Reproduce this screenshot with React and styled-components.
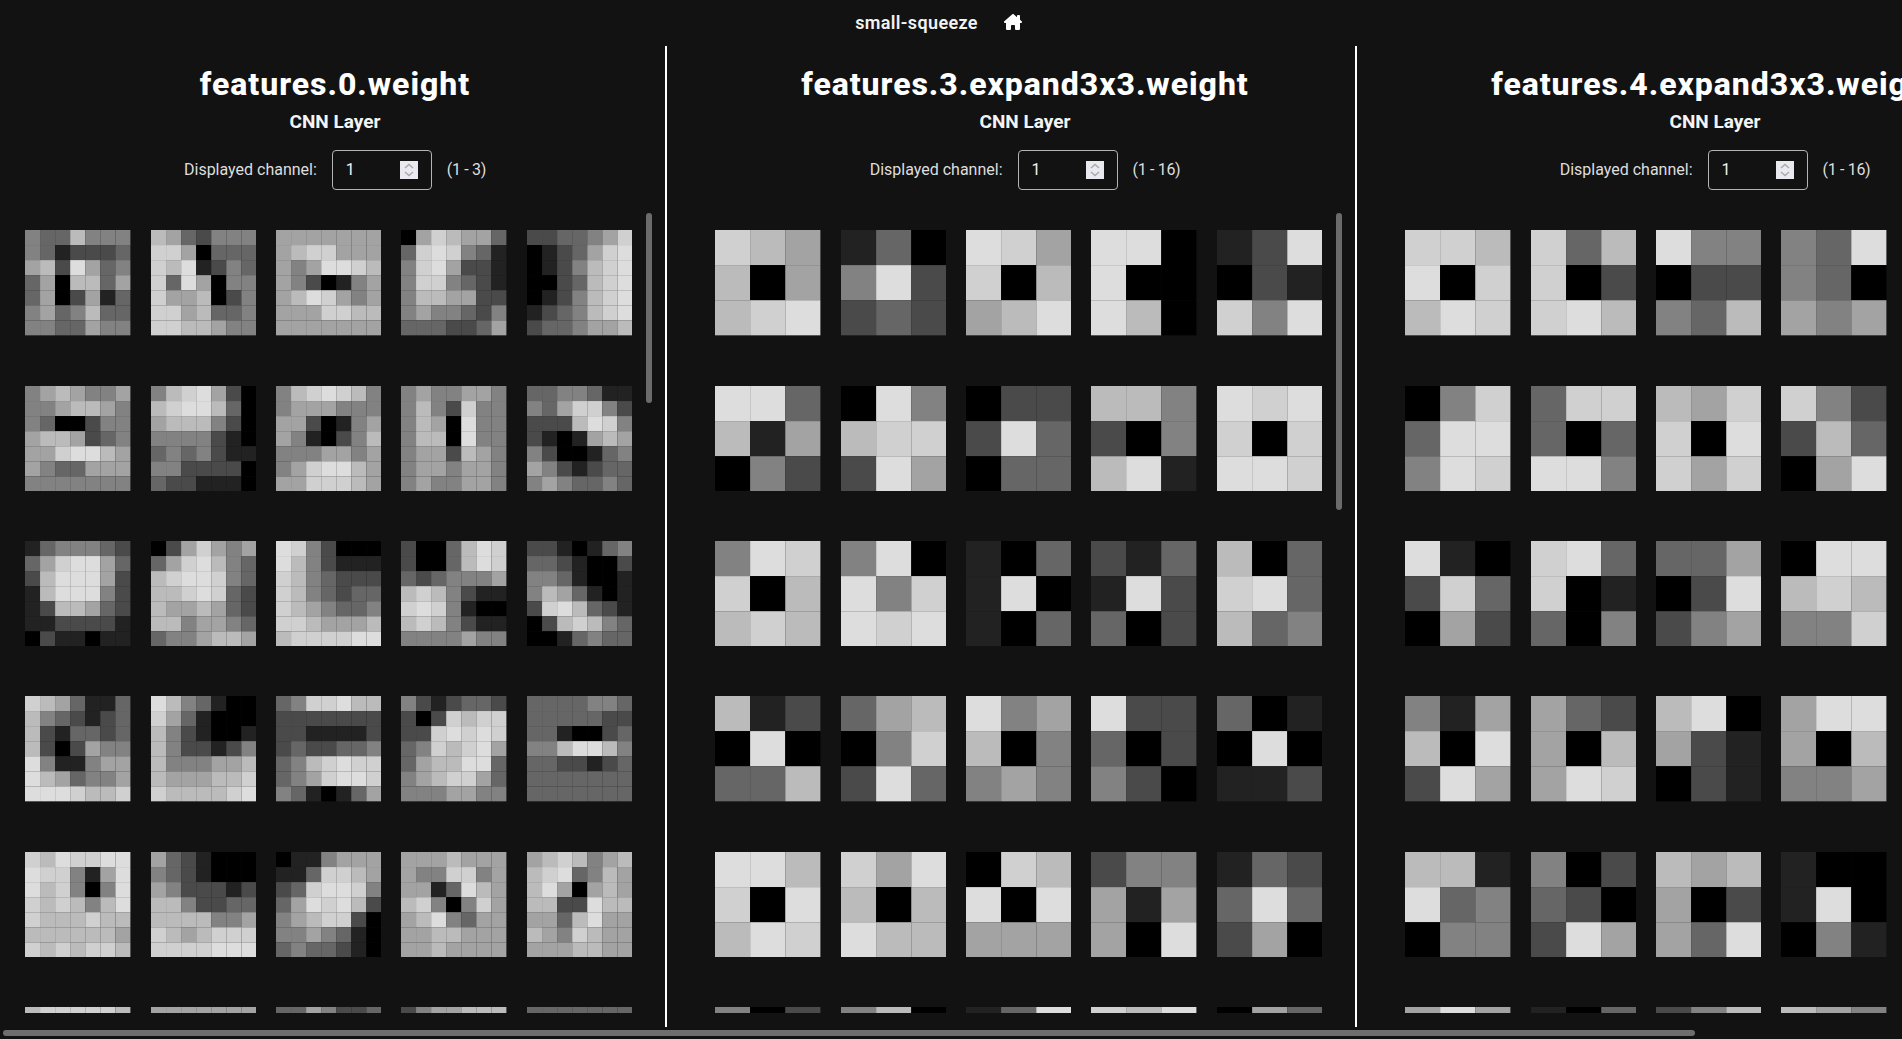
import React from 'react';
import styled, { createGlobalStyle } from 'styled-components';
import { FaHouseChimney } from 'react-icons/fa6';

const GlobalStyle = createGlobalStyle`
    html, body {
        margin: 0;
        background: #121212;
        overflow: hidden;
    }
`;

const SHADES = ['#000000', '#222222', '#4a4a4a', '#666666', '#828282', '#a3a3a3', '#bbbbbb', '#d0d0d0', '#dddddd'];

const SPIN_ICON = `url("data:image/svg+xml,%3Csvg xmlns='http://www.w3.org/2000/svg' width='18' height='18' fill='none' stroke='%23a8a8b0' stroke-width='1.4'%3E%3Cpath d='M5 7l4-3.5L13 7M5 11l4 3.5 4-3.5'/%3E%3C/svg%3E")`;

// each tile is a string of shade indexes, row after row
const LAYERS = [
    {
        name: 'features.0.weight',
        range: '(1 - 3)',
        size: 7,
        columns: 5,
        thumb: 190,
        tiles: [
            '4336444 4312223 5628534 3506635 3502513 4534633 4433544',
            '6532444 7750333 7681243 7385044 7556024 7756334 7766544',
            '5555555 5677555 5458876 5420145 5687545 5557766 5555555',
            '0576553 3787431 4785221 4774321 4665522 4544324 3332235',
            '2233457 0123578 0124678 0023678 0124678 1234678 2334556',
            '4565445 4456654 4300244 5665234 5578865 5433555 4444444',
            '4678520 6788630 5666420 4444210 3434211 4422220 3221110',
            '4678764 4555444 5520145 5410246 4445545 4578865 5577765',
            '4544554 4642744 4650844 4660844 4552654 4554554 4544554',
            '3344311 4357742 2226874 2101565 4200134 5421233 4543343',
            '1344432 3578853 2688852 1688842 1266532 1122221 0211011',
            '0257545 3578643 6788743 6678732 6556532 6645543 3445665',
            '8742000 8642111 7643222 7643233 7654334 7765556 6777788',
            '2003687 2003687 3234445 6764211 7874100 6764211 4444544',
            '2210134 3321002 4431001 4653101 2786321 0267643 0013433',
            '7653113 6432123 6213323 6202544 8411455 8653445 8887667',
            '8643100 7531000 6421001 6422124 6444556 6555667 7666678',
            '3477866 2222222 2211112 2322334 3467877 3457887 4310135',
            '4212332 2027677 2278787 3476785 3566883 4567753 4445544',
            '3333443 3333322 3310023 4468864 3322123 3333333 3333333',
            '7687788 8774158 8674048 7676468 7666766 6666665 7676776',
            '5321000 4321000 5422212 6642233 6666445 7656777 7777888',
            '0114555 1137765 2378874 3587862 4567720 4454310 3433210',
            '5556555 5447745 5513865 6740475 5684355 5566555 5565555',
            '5676456 6783465 6850565 6622866 5536855 6547655 5556655',
            '6777776', '5555555', '3354223', '2455666', '3333333',
        ],
    },
    {
        name: 'features.3.expand3x3.weight',
        range: '(1 - 16)',
        size: 3,
        columns: 5,
        thumb: 297,
        tiles: [
            '765 605 678', '130 482 232', '875 706 568', '880 800 860', '128 021 748',
            '883 615 042', '084 677 285', '022 283 033', '664 204 681', '878 707 887',
            '487 706 676', '480 847 878', '103 180 103', '213 182 302', '603 783 634',
            '612 080 336', '356 047 283', '845 604 454', '822 302 420', '301 080 112',
            '886 708 687', '758 606 866', '076 808 555', '244 515 508', '132 383 250',
            '402', '460', '138', '768', '053',
        ],
    },
    {
        name: 'features.4.expand3x3.weight',
        range: '(1 - 16)',
        size: 3,
        columns: 4,
        thumb: 297,
        tiles: [
            '776 807 687', '736 702 786', '844 022 436', '438 430 545',
            '047 388 487', '377 303 884', '657 708 757', '742 263 058',
            '810 273 052', '783 701 304', '335 028 245', '088 676 447',
            '415 608 285', '532 506 587', '680 521 021', '588 506 445',
            '661 834 044', '402 320 285', '656 502 538', '100 180 041',
            '585', '103', '246', '654',
        ],
    },
];

const Page = styled.div`
    position: relative;
    width: 1902px;
    height: 1039px;
    overflow: hidden;
    background: #121212;
    color: #ffffff;
    font-family: Roboto, "Open Sans", sans-serif;
`;

const TopBar = styled.header`
    height: 46px;
    padding: 0 25px 2px 0;
    box-sizing: border-box;
    display: flex;
    align-items: center;
    justify-content: center;
    gap: 26px;
`;

const AppName = styled.span`
    font-size: 18px;
    font-weight: 600;
    letter-spacing: 0.02em;
    color: #f2f2f2;
`;

const HomeLink = styled.a`
    display: flex;
    color: #ffffff;
`;

const Layers = styled.div`
    display: flex;
    height: 981px;
`;

const Panel = styled.section`
    flex: 0 0 667px;
    box-sizing: border-box;
    height: 981px;
    border-right: 2px solid #ffffff;
    display: flex;
    flex-direction: column;

    & + & {
        margin-left: 23px;
    }
`;

const PanelHead = styled.div`
    height: 164px;
    padding-left: 5px;
    display: flex;
    flex-direction: column;
    align-items: center;
    flex-shrink: 0;
    white-space: nowrap;
`;

const Title = styled.h1`
    margin: 18px 0 0;
    font-size: 32px;
    line-height: 40px;
    font-weight: 800;
    letter-spacing: 0.03em;
`;

const Subtitle = styled.h2`
    margin: 6px 0 0;
    font-size: 19px;
    line-height: 24px;
    font-weight: 700;
    color: #f4f4f4;
`;

const ChannelRow = styled.div`
    margin-top: 16px;
    display: flex;
    align-items: center;
    gap: 15px;
    font-size: 16px;
    color: #dedede;
`;

const ChannelLabel = styled.span`
    padding-bottom: 2px;
`;

const ChannelRange = styled.span`
    padding-bottom: 2px;
    letter-spacing: -0.02em;
`;

const ChannelInput = styled.input`
    width: 100px;
    height: 40px;
    box-sizing: border-box;
    padding: 0 13px 2px;
    background: transparent;
    border: 1px solid #b4b4b4;
    border-radius: 4px;
    color: #f2f2f2;
    font-family: inherit;
    font-size: 16px;

    &::-webkit-inner-spin-button {
        -webkit-appearance: none;
        appearance: none;
        opacity: 1;
        width: 18px;
        height: 18px;
        margin: 2px 0 0;
        background: #e9e9ef ${SPIN_ICON} center no-repeat;
    }
`;

const TileList = styled.div`
    position: relative;
    flex: 1;
    min-height: 0;
    margin-bottom: 14px;
    padding: 20.2px 0 0 25.3px;
    overflow: hidden;
    display: grid;
    grid-template-columns: repeat(${props => props.$columns}, 105.4px);
    grid-auto-rows: 105.33px;
    column-gap: 20px;
    row-gap: 50px;
`;

const TileSvg = styled.svg`
    display: block;
    width: 105.4px;
    height: 105.33px;
`;

const ScrollThumb = styled.div`
    position: absolute;
    top: 3px;
    right: 13px;
    width: 6px;
    height: ${props => props.$length}px;
    border-radius: 3px;
    background: #6b6b6b;
`;

const PageThumb = styled.div`
    position: absolute;
    left: 3px;
    bottom: 3px;
    width: 1692px;
    height: 6px;
    border-radius: 3px;
    background: #6e6e6e;
`;

function Tile({ data, size }) {
    let rows = data.split(' ');
    // the last row of tiles is cut off by the list, only its top cells are seen
    while (rows.length < size) rows.push(rows[0]);
    return (
        <TileSvg viewBox={`0 0 ${size} ${size}`} preserveAspectRatio="none">
            {rows.map((row, y) =>
                row.split('').map((shade, x) => (
                    <rect key={x} x={x} y={y} width="1" height="1" fill={SHADES[shade]} />
                ))
            )}
        </TileSvg>
    );
}

function Layer({ layer }) {
    return (
        <Panel>
            <PanelHead>
                <Title>{layer.name}</Title>
                <Subtitle>CNN Layer</Subtitle>
                <ChannelRow>
                    <ChannelLabel>Displayed channel:</ChannelLabel>
                    <ChannelInput type="number" defaultValue={1} min={1} />
                    <ChannelRange>{layer.range}</ChannelRange>
                </ChannelRow>
            </PanelHead>
            <TileList $columns={layer.columns}>
                {layer.tiles.map((data, i) => (
                    <Tile key={i} data={data} size={layer.size} />
                ))}
                <ScrollThumb $length={layer.thumb} />
            </TileList>
        </Panel>
    );
}

export default function App() {
    return (
        <Page>
            <GlobalStyle />
            <TopBar>
                <AppName>small-squeeze</AppName>
                <HomeLink><FaHouseChimney size={18} /></HomeLink>
            </TopBar>
            <Layers>
                {LAYERS.map(layer => (
                    <Layer key={layer.name} layer={layer} />
                ))}
            </Layers>
            <PageThumb />
        </Page>
    );
}
